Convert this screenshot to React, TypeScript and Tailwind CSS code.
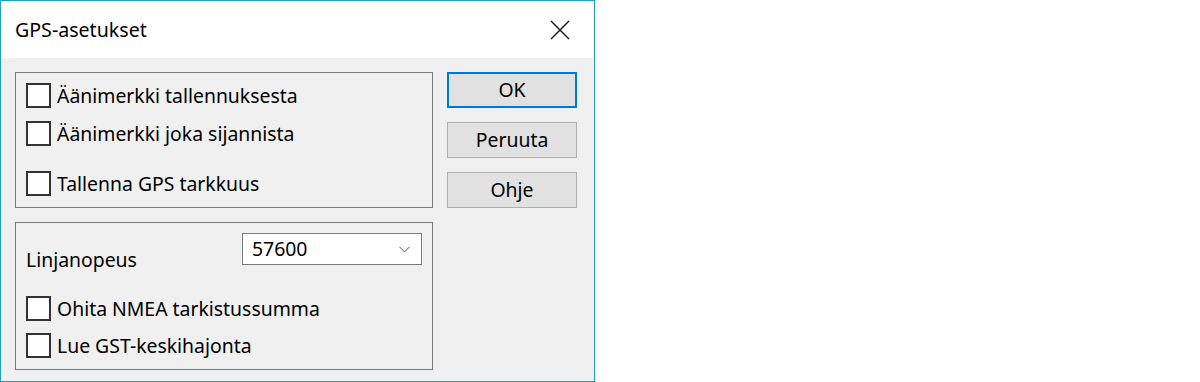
import { ChevronDown } from 'lucide-react';

const font = { fontFamily: '"Noto Sans", "Liberation Sans", sans-serif' };

function Check({ label }: { label: string }) {
  return (
    <label className="flex items-center gap-[6px] h-[25px]">
      <span className="w-[25px] h-[25px] border-2 border-[#333333] bg-white shrink-0" />
      <span className="text-[19.4px] leading-none text-black">{label}</span>
    </label>
  );
}

function Btn({ label, primary }: { label: string; primary?: boolean }) {
  return (
    <button
      className={
        'w-[130px] h-[36px] bg-[#e1e1e1] text-[19.4px] text-black ' +
        (primary ? 'border-2 border-[#0078d7]' : 'border border-[#adadad]')
      }
    >
      {label}
    </button>
  );
}

export default function App() {
  return (
    <div className="w-[1200px] h-[382px] bg-white" style={font}>
      <div className="w-[595px] h-[382px] border border-[#1aa3c7] flex flex-col">
        {/* title bar */}
        <div className="h-[57px] bg-white flex items-center justify-between pl-[14px] pr-[24px]">
          <span className="text-[19.6px] text-black">GPS-asetukset</span>
          <svg width="20" height="20" viewBox="0 0 20 20" fill="none" stroke="#111" strokeWidth="1.4">
            <path d="M1 1 L19 19 M19 1 L1 19" />
          </svg>
        </div>

        <div className="flex-1 bg-[#f0f0f0] flex gap-[14px] pl-[14px] pt-[14px]">
          <div className="flex flex-col gap-[14px] w-[418px]">
            <div className="h-[136px] border border-[#7a7a7a] pl-[10px] pt-[10px] flex flex-col">
              <Check label="Äänimerkki tallennuksesta" />
              <div className="h-[13px]" />
              <Check label="Äänimerkki joka sijannista" />
              <div className="h-[25px]" />
              <Check label="Tallenna GPS tarkkuus" />
            </div>

            <div className="h-[148px] border border-[#7a7a7a] pl-[10px] pt-[10px] pr-[10px] flex flex-col">
              <div className="flex justify-between items-start h-[32px]">
                <span className="text-[19.4px] text-black mt-[16px] leading-[22px]">Linjanopeus</span>
                <div className="w-[180px] h-[32px] bg-white border border-[#7a7a7a] flex items-center justify-between pl-[9px] pr-[7px]">
                  <span className="text-[19.4px] leading-none text-black">57600</span>
                  <ChevronDown size={19} strokeWidth={1.1} color="#333" />
                </div>
              </div>
              <div className="h-[31px]" />
              <Check label="Ohita NMEA tarkistussumma" />
              <div className="h-[12px]" />
              <Check label="Lue GST-keskihajonta" />
            </div>
          </div>

          <div className="flex flex-col gap-[14px]">
            <Btn label="OK" primary />
            <Btn label="Peruuta" />
            <Btn label="Ohje" />
          </div>
        </div>
      </div>
    </div>
  );
}
